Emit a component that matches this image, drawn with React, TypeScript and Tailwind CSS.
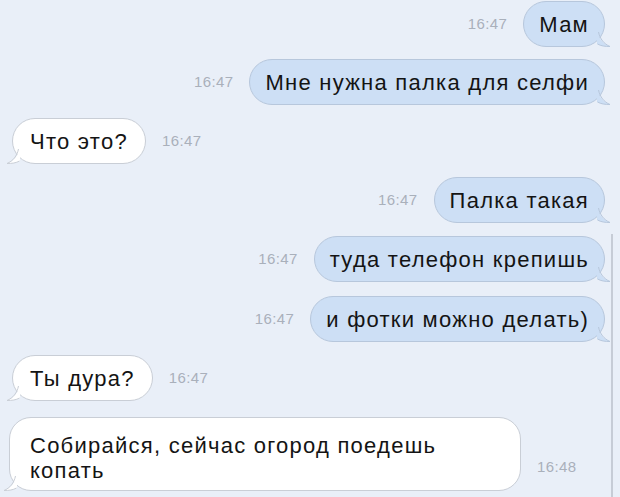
import React from "react";

type Msg = { text: string; time: string; out: boolean; mt: string };

const messages: Msg[] = [
  { text: "Мам", time: "16:47", out: true, mt: "mt-[1px]" },
  { text: "Мне нужна палка для селфи", time: "16:47", out: true, mt: "mt-[12px]" },
  { text: "Что это?", time: "16:47", out: false, mt: "mt-[13px]" },
  { text: "Палка такая", time: "16:47", out: true, mt: "mt-[13px]" },
  { text: "туда телефон крепишь", time: "16:47", out: true, mt: "mt-[13px]" },
  { text: "и фотки можно делать)", time: "16:47", out: true, mt: "mt-[14px]" },
  { text: "Ты дура?", time: "16:47", out: false, mt: "mt-[13px]" },
];

const OutTail = () => (
  <svg className="absolute -right-[7px] bottom-[-1px]" width="14" height="16" viewBox="0 0 14 16">
    <path d="M0 0 C2 8 6 13 13 15.5 C8 15.5 4 15 0 13 Z" fill="#cddff5" />
    <path d="M1.5 1 C3 8 7 13 13 15.5 C8 15.5 4 15 0.5 13" fill="none" stroke="#b7c7dc" strokeWidth="1" />
  </svg>
);

const InTail = () => (
  <svg className="absolute -left-[7px] bottom-[-1px]" width="14" height="16" viewBox="0 0 14 16">
    <path d="M14 0 C12 8 8 13 1 15.5 C6 15.5 10 15 14 13 Z" fill="#ffffff" />
    <path d="M12.5 1 C11 8 7 13 1 15.5 C6 15.5 10 15 13.5 13" fill="none" stroke="#c9ced6" strokeWidth="1" />
  </svg>
);

const Time = ({ t }: { t: string }) => (
  <span className="text-[15px] text-[#a9b0bb] tracking-[0.4px]">{t}</span>
);

function Bubble({ m }: { m: Msg }) {
  if (m.out) {
    return (
      <div className={`flex items-center justify-end gap-[16px] pr-[15px] ${m.mt}`}>
        <Time t={m.time} />
        <div className="relative h-[46px] flex items-center px-[15px] rounded-[23px] bg-[#cddff5] border border-[#b7c7dc] text-[22px] tracking-[1.25px] text-[#141414]">
          {m.text}
          <OutTail />
        </div>
      </div>
    );
  }
  return (
    <div className={`flex items-center gap-[16px] pl-[12px] ${m.mt}`}>
      <div className="relative h-[46px] flex items-center px-[17px] rounded-[23px] bg-white border border-[#c9ced6] text-[22px] tracking-[1.25px] text-[#141414]">
        {m.text}
        <InTail />
      </div>
      <Time t={m.time} />
    </div>
  );
}

export default function App() {
  return (
    <div className="relative w-[620px] h-[497px] overflow-hidden bg-[#e9eff8] font-['Liberation_Sans',Arial,sans-serif]">
      <div className="flex flex-col">
        {messages.map((m, i) => (
          <Bubble key={i} m={m} />
        ))}
        <div className="flex items-end gap-[11px] pl-[9px] mt-[16px]">
          <div className="relative w-[512px] pt-[15px] pb-[7px] px-[20px] rounded-[22px] bg-white border border-[#c9ced6] text-[22px] tracking-[1.25px] leading-[25px] text-[#141414]">
            Собирайся, сейчас огород поедешь
            <br />
            копать
            <InTail />
          </div>
          <span className="mb-[12px] ml-[5px]">
            <Time t="16:48" />
          </span>
        </div>
      </div>
      <div className="absolute right-[7px] top-[234px] bottom-0 w-[2px] bg-[#c6ccd6]" />
    </div>
  );
}
